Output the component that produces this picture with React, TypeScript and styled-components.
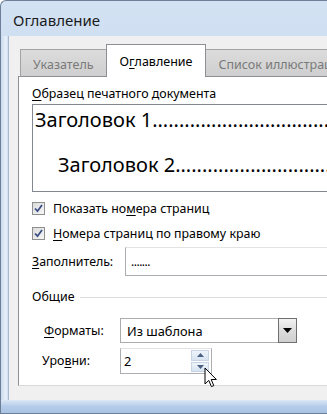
import React from "react";
import styled, { createGlobalStyle } from "styled-components";

const Global = createGlobalStyle`
  html, body { margin: 0; padding: 0; background: #fff; }
  body { font-family: "Noto Sans", "Open Sans", sans-serif; font-size: 12.4px; color: #000; }
  u { text-decoration: underline; text-underline-offset: 2px; }
`;

const Window = styled.div`
  position: relative;
  width: 327px;
  height: 414px;
  overflow: hidden;
  box-sizing: border-box;
  display: flex;
  flex-direction: column;
  background: linear-gradient(180deg, #d3e2f3 0%, #c2d6ee 40%, #b9d0ea 100%);
  border-left: 1px solid #6d7f96;
  border-top: 1px solid #6d7f96;
  border-top-left-radius: 6px;
`;

const TitleBar = styled.div`
  height: 35px;
  display: flex;
  align-items: center;
  padding-left: 12px;
  flex: none;
`;

const Title = styled.span`
  font-size: 15px;
  color: #1b1b1b;
  margin-top: 2px;
`;

const Frame = styled.div`
  flex: 1;
  display: flex;
  flex-direction: column;
  padding: 0 0 13px 7px;
  background: linear-gradient(90deg, #c9dbef 0px, #e9f1fa 5px, #c9dbef 7px);
  border-bottom: 1px solid #6d7f96;
  position: relative;
  &::after {
    content: "";
    position: absolute;
    left: 0;
    right: 0;
    bottom: 0;
    height: 13px;
    background: linear-gradient(180deg, #dbe7f5 0%, #b4cce9 50%, #a9c3e4 100%);
  }
`;

const Body = styled.div`
  flex: 1;
  display: flex;
  flex-direction: column;
  background: #f0f0f0;
  border-left: 1px solid #a6b9d0;
  padding: 8px 0 14px 9px;
`;

const Tabs = styled.div`
  display: flex;
  align-items: flex-end;
  padding-left: 2px;
  height: 33px;
  position: relative;
  z-index: 1;
  margin-bottom: -1px;
`;

const Tab = styled.div<{ $active?: boolean }>`
  box-sizing: border-box;
  flex: none;
  height: ${(p) => (p.$active ? "33px" : "28px")};
  padding: ${(p) => (p.$active ? "0 13px" : "0 12px")};
  ${(p) => (p.$active ? "margin: 0 -1px;" : "")}
  display: flex;
  align-items: center;
  justify-content: center;
  font-size: 12.5px;
  color: ${(p) => (p.$active ? "#000" : "#7a7a7a")};
  background: ${(p) => (p.$active ? "#fff" : "linear-gradient(180deg, #dcdcdc, #cfcfcf)")};
  border: 1px solid ${(p) => (p.$active ? "#8d8f94" : "#a3a3a3")};
  border-bottom: ${(p) => (p.$active ? "none" : "1px solid #8d8f94")};
  position: relative;
  z-index: ${(p) => (p.$active ? 2 : 1)};
  padding-top: ${(p) => (p.$active ? "0" : "2px")};
`;

const Panel = styled.div`
  flex: 1;
  width: 360px;
  box-sizing: border-box;
  background: #fff;
  border: 1px solid #d9d9d9;
  border-left-color: #8d8f94;
  border-top-color: #8d8f94;
  padding: 9px 0 0 13px;
  display: flex;
  flex-direction: column;
`;

const Label = styled.div<{ $w?: number }>`
  line-height: 16px;
  white-space: nowrap;
  flex: none;
  ${(p) => (p.$w ? `width: ${p.$w}px;` : "")}
`;

const Preview = styled.div`
  margin-top: 2px;
  height: 88px;
  width: 330px;
  box-sizing: border-box;
  border: 1px solid #828790;
  overflow: hidden;
  display: flex;
  flex-direction: column;
`;

const Heading = styled.div<{ $indent: number; $top: number }>`
  font-size: 20px;
  line-height: 28px;
  white-space: nowrap;
  padding-left: ${(p) => p.$indent}px;
  margin-top: ${(p) => p.$top}px;
`;

const CheckRow = styled.div<{ $top: number }>`
  display: flex;
  align-items: center;
  gap: 8px;
  height: 16px;
  margin-top: ${(p) => p.$top}px;
  white-space: nowrap;
`;

const Box = styled.span`
  width: 13px;
  height: 13px;
  box-sizing: border-box;
  border: 1px solid #8e8f8f;
  background: linear-gradient(135deg, #dcdcdc, #f6f6f6);
  display: flex;
  align-items: center;
  justify-content: center;
  flex: none;
`;

const FieldRow = styled.div<{ $top: number; $indent?: number }>`
  display: flex;
  align-items: center;
  margin-top: ${(p) => p.$top}px;
  padding-left: ${(p) => p.$indent || 0}px;
`;

const TextInput = styled.div`
  width: 220px;
  height: 29px;
  box-sizing: border-box;
  border: 1px solid #abadb3;
  border-top-color: #e3e3e3;
  display: flex;
  align-items: center;
  padding-left: 5px;
  font-size: 12px;
  letter-spacing: -0.5px;
`;

const GroupHeader = styled.div`
  margin-top: 13px;
  display: flex;
  align-items: center;
  gap: 6px;
  height: 16px;
  &::after {
    content: "";
    flex: 1;
    height: 1px;
    background: #dcdcdc;
  }
`;

const Select = styled.div`
  width: 177px;
  height: 25px;
  box-sizing: border-box;
  border: 1px solid #acacac;
  display: flex;
  align-items: center;
  font-size: 12.8px;
  padding-left: 6px;
  justify-content: space-between;
`;

const DropButton = styled.div`
  width: 19px;
  height: 25px;
  box-sizing: border-box;
  margin-right: -1px;
  border: 1px solid #707070;
  background: linear-gradient(180deg, #f3f3f3, #dcdcdc 50%, #cfcfcf);
  display: flex;
  align-items: center;
  justify-content: center;
`;

const Spinner = styled.div`
  width: 92px;
  height: 26px;
  box-sizing: border-box;
  border: 1px solid #abadb3;
  border-top-color: #e3e3e3;
  display: flex;
  align-items: center;
  justify-content: space-between;
  padding: 1px 1px 1px 3px;
  font-size: 12.8px;
`;

const SpinButtons = styled.div`
  display: flex;
  flex-direction: column;
  gap: 1px;
  width: 18px;
  height: 22px;
  margin-right: 1px;
`;

const SpinButton = styled.div`
  flex: 1;
  box-sizing: border-box;
  border: 1px solid #c8d4e4;
  background: linear-gradient(180deg, #eef4fb, #d7e3f1);
  display: flex;
  align-items: center;
  justify-content: center;
`;

const Cursor = styled.svg`
  position: absolute;
  left: 203px;
  top: 366px;
`;

export default function App() {
  const dots = ".".repeat(60);
  return (
    <>
      <Global />
      <Window>
        <TitleBar>
          <Title>Оглавление</Title>
        </TitleBar>
        <Frame>
          <Body>
            <Tabs>
              <Tab>Указатель</Tab>
              <Tab $active>
                О<u>г</u>лавление
              </Tab>
              <Tab>Список иллюстраций</Tab>
            </Tabs>
            <Panel>
              <Label>
                <u>О</u>бразец печатного документа
              </Label>
              <Preview>
                <Heading $indent={2} $top={1}>
                  Заголовок 1{dots}
                </Heading>
                <Heading $indent={25} $top={17}>
                  Заголовок 2{dots}
                </Heading>
              </Preview>
              <CheckRow $top={8}>
                <Box>
                  <CheckMark />
                </Box>
                <span>
                  Показать но<u>м</u>ера страниц
                </span>
              </CheckRow>
              <CheckRow $top={9}>
                <Box>
                  <CheckMark />
                </Box>
                <span>
                  <u>Н</u>омера страниц по правому краю
                </span>
              </CheckRow>
              <FieldRow $top={6}>
                <Label $w={93}>
                  <u>З</u>аполнитель:
                </Label>
                <TextInput>.......</TextInput>
              </FieldRow>
              <GroupHeader>
                <Label>Общие</Label>
              </GroupHeader>
              <FieldRow $top={13} $indent={12}>
                <Label $w={76}>
                  <u>Ф</u>орматы:
                </Label>
                <Select>
                  <span>Из шаблона</span>
                  <DropButton>
                    <svg width="9" height="5" viewBox="0 0 9 5">
                      <path d="M0 0H9L4.5 5Z" fill="#000" />
                    </svg>
                  </DropButton>
                </Select>
              </FieldRow>
              <FieldRow $top={5} $indent={10}>
                <Label $w={78}>
                  Уро<u>в</u>ни:
                </Label>
                <Spinner>
                  <span>2</span>
                  <SpinButtons>
                    <SpinButton>
                      <svg width="7" height="4" viewBox="0 0 7 4">
                        <path d="M0 4L3.5 0L7 4Z" fill="#4b5f80" />
                      </svg>
                    </SpinButton>
                    <SpinButton>
                      <svg width="7" height="4" viewBox="0 0 7 4">
                        <path d="M0 0H7L3.5 4Z" fill="#4b5f80" />
                      </svg>
                    </SpinButton>
                  </SpinButtons>
                </Spinner>
              </FieldRow>
            </Panel>
          </Body>
        </Frame>
        <Cursor width="14" height="22" viewBox="0 0 14 22">
          <path
            d="M1 1V17L4.8 13.4L7.4 19.6L9.8 18.6L7.2 12.5H12.4Z"
            fill="#fff"
            stroke="#000"
            strokeWidth="1"
            strokeLinejoin="miter"
          />
        </Cursor>
      </Window>
    </>
  );
}

function CheckMark() {
  return (
    <svg width="9" height="9" viewBox="0 0 9 9">
      <path d="M1 4.5L3.5 7.2L8 1" fill="none" stroke="#3b4f86" strokeWidth="1.8" />
    </svg>
  );
}
